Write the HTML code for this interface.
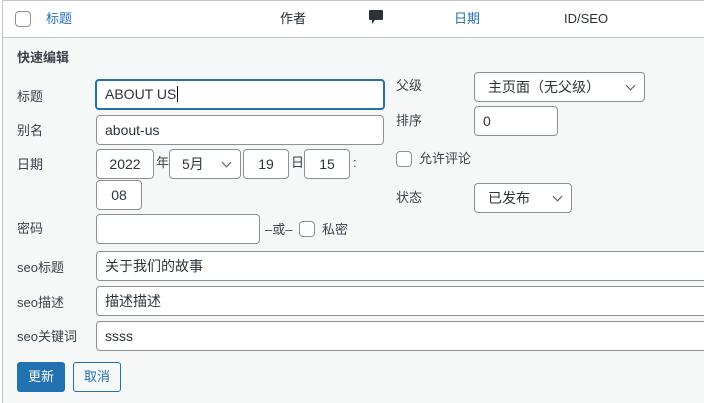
<!DOCTYPE html>
<html><head><meta charset="utf-8"><style>
*{box-sizing:border-box;margin:0;padding:0}
body{width:704px;height:403px;overflow:hidden;background:#f6f7f7;font-family:"Liberation Sans","Noto Sans CJK SC",sans-serif;font-size:13px;color:#1d2327;position:relative}
.a{position:absolute}
.hd{left:3px;top:0;width:701px;height:38px;background:#fff;border-top:1px solid #c3c4c7;border-bottom:1px solid #c3c4c7}
.lb{position:absolute;color:#3c434a;font-size:13px;line-height:16px}
.in{position:absolute;background:#fff;border:1px solid #8c8f94;border-radius:4px;height:30px;line-height:28px;padding-left:8px;font-size:14px;color:#2c3338}
.cb{position:absolute;width:16px;height:16px;border:1px solid #8c8f94;border-radius:4px;background:#fff}
.sel::after{content:"";position:absolute;right:10px;top:9px;width:6px;height:6px;border-right:1.5px solid #50575e;border-bottom:1.5px solid #50575e;transform:rotate(45deg)}
.c{text-align:center;padding:0}
</style></head><body>
<div class="a" style="left:0;top:0;width:3px;height:403px;background:#fff;border-right:1px solid #c3c4c7"></div>
<div class="a hd"></div>
<div class="cb" style="left:15px;top:11px"></div>
<div class="lb" style="left:46px;top:11px;color:#2271b1">标题</div>
<div class="lb" style="left:280px;top:11px;color:#1d2327">作者</div>
<svg class="a" style="left:369px;top:10px" width="14" height="15" viewBox="0 0 14 15"><path d="M1 0h12a1 1 0 0 1 1 1v8a1 1 0 0 1-1 1H6l-3 4v-4H1a1 1 0 0 1-1-1V1a1 1 0 0 1 1-1z" fill="#2c3338"/></svg>
<div class="lb" style="left:454px;top:11px;color:#2271b1">日期</div>
<div class="lb" style="left:564px;top:11px;color:#2c3338">ID/SEO</div>
<div class="lb" style="left:17px;top:50px;font-weight:bold;color:#3c434a">快速编辑</div>
<div class="lb" style="left:17px;top:89px">标题</div>
<div class="lb" style="left:17px;top:123px">别名</div>
<div class="lb" style="left:17px;top:157px">日期</div>
<div class="lb" style="left:17px;top:221px">密码</div>
<div class="lb" style="left:17px;top:260px">seo标题</div>
<div class="lb" style="left:17px;top:295px">seo描述</div>
<div class="lb" style="left:17px;top:329px">seo关键词</div>
<div class="in" style="left:95px;top:79px;width:290px;height:31px;border:2px solid #2271b1;line-height:27px">ABOUT US<span style="border-left:1px solid #000;margin-left:1px"></span></div>
<div class="in" style="left:96px;top:115px;width:288px">about-us</div>
<div class="in c" style="left:96px;top:149px;width:58px">2022</div>
<div class="lb" style="left:156px;top:155px">年</div>
<div class="in sel" style="left:169px;top:149px;width:72px;padding-left:12px">5月</div>
<div class="in c" style="left:243px;top:149px;width:46px">19</div>
<div class="lb" style="left:291px;top:155px">日</div>
<div class="in c" style="left:304px;top:149px;width:46px">15</div>
<div class="lb" style="left:353px;top:155px">:</div>
<div class="in c" style="left:96px;top:180px;width:46px">08</div>
<div class="in" style="left:96px;top:214px;width:164px"></div>
<div class="lb" style="left:265px;top:222px">–或–</div>
<div class="cb" style="left:299px;top:221px"></div>
<div class="lb" style="left:322px;top:222px">私密</div>
<div class="in" style="left:96px;top:251px;width:620px">关于我们的故事</div>
<div class="in" style="left:96px;top:286px;width:620px">描述描述</div>
<div class="in" style="left:96px;top:321px;width:620px">ssss</div>
<div class="a" style="left:17px;top:362px;width:48px;height:30px;background:#2271b1;border-radius:3px;color:#fff;text-align:center;line-height:30px">更新</div>
<div class="a" style="left:73px;top:362px;width:48px;height:30px;border:1px solid #2271b1;border-radius:3px;color:#2271b1;text-align:center;line-height:28px;background:#f6f7f7">取消</div>
<div class="lb" style="left:396px;top:78px">父级</div>
<div class="in sel" style="left:474px;top:72px;width:171px;padding-left:13px">主页面（无父级）</div>
<div class="lb" style="left:396px;top:113px">排序</div>
<div class="in" style="left:474px;top:106px;width:84px">0</div>
<div class="cb" style="left:396px;top:151px"></div>
<div class="lb" style="left:419px;top:151px">允许评论</div>
<div class="lb" style="left:396px;top:190px">状态</div>
<div class="in sel" style="left:474px;top:183px;width:98px;padding-left:13px">已发布</div>
</body></html>
